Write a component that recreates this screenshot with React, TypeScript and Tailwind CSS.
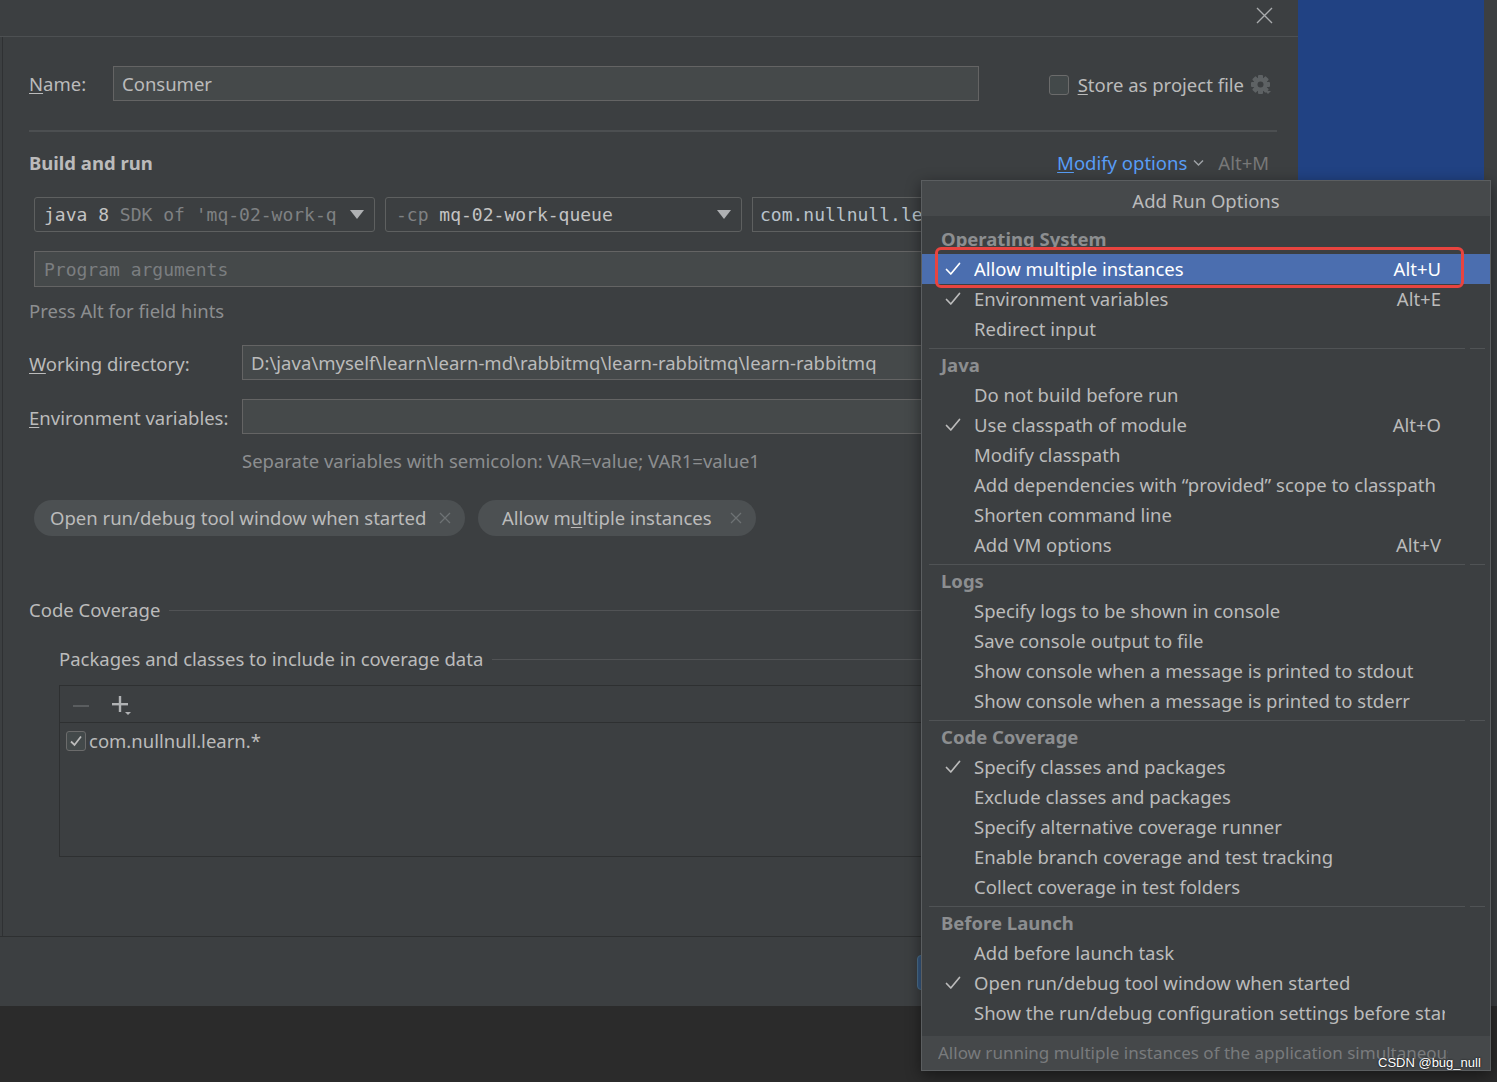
import React from "react";

const Check = ({ color = "#bbbbbb" }: { color?: string }) => (
  <svg width="16" height="16" viewBox="0 0 16 16" fill="none">
    <path d="M1.5 8.5 L5.8 13 L14.5 2.5" stroke={color} strokeWidth="1.7" strokeLinecap="round" strokeLinejoin="round" />
  </svg>
);

const SmallX = () => (
  <svg width="12" height="12" viewBox="0 0 12 12" fill="none">
    <path d="M1 1 L11 11 M11 1 L1 11" stroke="#6e7274" strokeWidth="1.3" />
  </svg>
);

const Triangle = () => (
  <svg width="14" height="9" viewBox="0 0 14 9">
    <polygon points="0,0 14,0 7,9" fill="#afb1b3" />
  </svg>
);

const Gear = () => (
  <svg width="22" height="22" viewBox="0 0 22 22">
    <g fill="#5e6264">
      {[0, 45, 90, 135].map((a) => (
        <rect key={a} x="8" y="1" width="5" height="19" rx="1" transform={`rotate(${a} 10.5 10.5)`} />
      ))}
      <circle cx="10.5" cy="10.5" r="7" />
    </g>
    <circle cx="10.5" cy="10.5" r="3" fill="#3c3f41" />
    <polygon points="15,17 21,17 18,20" fill="#5e6264" />
  </svg>
);

type Item = { label: string; checked?: boolean; shortcut?: string; selected?: boolean };

const sections: { title: string; items: Item[] }[] = [
  {
    title: "Operating System",
    items: [
      { label: "Allow multiple instances", checked: true, shortcut: "Alt+U", selected: true },
      { label: "Environment variables", checked: true, shortcut: "Alt+E" },
      { label: "Redirect input" },
    ],
  },
  {
    title: "Java",
    items: [
      { label: "Do not build before run" },
      { label: "Use classpath of module", checked: true, shortcut: "Alt+O" },
      { label: "Modify classpath" },
      { label: "Add dependencies with \u201cprovided\u201d scope to classpath" },
      { label: "Shorten command line" },
      { label: "Add VM options", shortcut: "Alt+V" },
    ],
  },
  {
    title: "Logs",
    items: [
      { label: "Specify logs to be shown in console" },
      { label: "Save console output to file" },
      { label: "Show console when a message is printed to stdout" },
      { label: "Show console when a message is printed to stderr" },
    ],
  },
  {
    title: "Code Coverage",
    items: [
      { label: "Specify classes and packages", checked: true },
      { label: "Exclude classes and packages" },
      { label: "Specify alternative coverage runner" },
      { label: "Enable branch coverage and test tracking" },
      { label: "Collect coverage in test folders" },
    ],
  },
  {
    title: "Before Launch",
    items: [
      { label: "Add before launch task" },
      { label: "Open run/debug tool window when started", checked: true },
      { label: "Show the run/debug configuration settings before start" },
    ],
  },
];

const MenuItem = ({ item }: { item: Item }) => (
  <div
    className={`flex h-[30px] items-center pl-[23px] pr-[45px] whitespace-nowrap ${
      item.selected ? "bg-[#4b6eaf] text-white" : "text-[#bbbbbb]"
    }`}
  >
    <div className="flex w-[16px] items-center">{item.checked ? <Check color={item.selected ? "#ffffff" : "#bbbbbb"} /> : null}</div>
    <span className="ml-[13px] flex-1 overflow-hidden">{item.label}</span>
    {item.shortcut ? <span className="ml-4 pr-[4px]">{item.shortcut}</span> : null}
  </div>
);

export default function App() {
  return (
    <div className="relative h-[1082px] w-[1497px] overflow-hidden bg-[#2b2b2b] font-['Noto_Sans',sans-serif] text-[18.5px] text-[#bbbbbb]">
      <div className="flex h-[1006px]">
        {/* Dialog */}
        <div className="flex w-[1298px] flex-col bg-[#3c3f41]">
          {/* title bar */}
          <div className="flex h-[37px] items-start justify-end border-b border-[#4d5052] pr-[25px] pt-[7px]">
            <svg width="17" height="17" viewBox="0 0 17 17" fill="none">
              <path d="M1 1 L16 16 M16 1 L1 16" stroke="#a9abad" strokeWidth="1.4" />
            </svg>
          </div>
          {/* content */}
          <div className="ml-[2px] flex h-[899px] flex-col border-l border-[#2f3133] pl-[26px] pr-[21px]">
            {/* Name row */}
            <div className="mt-[29px] flex h-[35px] items-center">
              <div className="w-[84px] leading-[26px]">
                <span className="underline underline-offset-2">N</span>ame:
              </div>
              <div className="flex h-[35px] w-[866px] items-center border border-[#646464] bg-[#45494a] pl-[8px]">Consumer</div>
              <div className="ml-auto mt-[3px] flex items-center pr-[5px]">
                <div className="h-[20px] w-[20px] rounded-[3px] border border-[#6b6b6b] bg-[#43494a]" />
                <span className="ml-[9px]">
                  <span className="underline underline-offset-2">S</span>tore as project file
                </span>
                <span className="ml-[6px]">
                  <Gear />
                </span>
              </div>
            </div>
            <div className="mt-[29px] h-[2px] bg-[#4c4f51]" />
            {/* Build and run */}
            <div className="mt-[16px] flex h-[30px] items-center justify-between pr-[8px]">
              <span className="font-bold text-[#bbbbbb]">Build and run</span>
              <div className="flex items-center">
                <span className="text-[#589df6]">
                  <span className="underline underline-offset-2">M</span>odify options
                </span>
                <svg className="ml-[6px]" width="11" height="8" viewBox="0 0 11 8" fill="none">
                  <path d="M1 1.5 L5.5 6 L10 1.5" stroke="#9ea2a6" strokeWidth="1.5" />
                </svg>
                <span className="ml-[14px] text-[#787878]">Alt+M</span>
              </div>
            </div>
            {/* combobox row */}
            <div className="mt-[19px] flex h-[35px] gap-[10px] pl-[5px] font-['DejaVu_Sans_Mono',monospace] text-[18px]">
              <div className="flex w-[341px] items-center rounded-[3px] border border-[#5e6060] pl-[9px] pr-[10px]">
                <span className="flex-1 overflow-hidden whitespace-nowrap">
                  <span className="text-[#c4c4c4]">java 8</span>
                  <span className="text-[#7f8183]"> SDK of 'mq-02-work-q</span>
                </span>
                <Triangle />
              </div>
              <div className="flex w-[357px] items-center rounded-[3px] border border-[#5e6060] pl-[10px] pr-[10px]">
                <span className="flex-1 overflow-hidden whitespace-nowrap">
                  <span className="text-[#7f8183]">-cp </span>
                  <span className="text-[#c4c4c4]">mq-02-work-queue</span>
                </span>
                <Triangle />
              </div>
              <div className="flex flex-1 items-center border border-[#5e6060] pl-[7px] text-[#b9c3cc]">com.nullnull.learn.Consumer</div>
            </div>
            {/* Program arguments */}
            <div className="ml-[5px] mt-[19px] flex h-[36px] items-center border border-[#646464] bg-[#45494a] pl-[9px] font-['DejaVu_Sans_Mono',monospace] text-[18px] text-[#7b7e80]">
              Program arguments
            </div>
            <div className="mt-[11px] h-[26px] leading-[26px] text-[#8c8e90]">Press Alt for field hints</div>
            {/* Working directory */}
            <div className="mt-[21px] flex h-[35px] items-center">
              <div className="w-[213px] pt-[3px]">
                <span className="underline underline-offset-2">W</span>orking directory:
              </div>
              <div className="flex h-[35px] flex-1 items-center border border-[#646464] bg-[#45494a] pl-[8px] whitespace-nowrap">
                D:\java\myself\learn\learn-md\rabbitmq\learn-rabbitmq\learn-rabbitmq
              </div>
            </div>
            <div className="mt-[19px] flex h-[35px] items-center">
              <div className="w-[213px] pt-[3px]">
                <span className="underline underline-offset-2">E</span>nvironment variables:
              </div>
              <div className="h-[35px] flex-1 border border-[#646464] bg-[#45494a]" />
            </div>
            <div className="mt-[14px] h-[26px] pl-[213px] leading-[26px] text-[#8c8e90]">Separate variables with semicolon: VAR=value; VAR1=value1</div>
            {/* chips */}
            <div className="mt-[26px] flex h-[36px] gap-[13px] pl-[5px]">
              <div className="flex w-[431px] items-center rounded-full bg-[#4c5052] pl-[16px] pr-[14px]">
                <span className="flex-1 whitespace-nowrap">Open run/debug tool window when started</span>
                <SmallX />
              </div>
              <div className="flex w-[278px] items-center rounded-full bg-[#4c5052] pl-[24px] pr-[14px]">
                <span className="flex-1 whitespace-nowrap">
                  Allow m<span className="underline underline-offset-2">u</span>ltiple instances
                </span>
                <SmallX />
              </div>
            </div>
            {/* Code coverage */}
            <div className="mt-[61px] flex h-[26px] items-center">
              <span className="whitespace-nowrap">Code Coverage</span>
              <div className="ml-[9px] h-px flex-1 bg-[#515355]" />
            </div>
            <div className="mt-[23px] flex h-[26px] items-center pl-[30px]">
              <span className="whitespace-nowrap">Packages and classes to include in coverage data</span>
              <div className="ml-[9px] h-px flex-1 bg-[#515355]" />
            </div>
            <div className="ml-[30px] mt-[13px] flex h-[172px] flex-col border border-[#2e3031]">
              <div className="flex h-[37px] items-center border-b border-[#2e3031] pl-[12px] pt-[4px]">
                <svg width="18" height="4" viewBox="0 0 18 4">
                  <rect x="1" y="1" width="16" height="2" fill="#5a5d5f" />
                </svg>
                <svg className="ml-[21px]" width="22" height="22" viewBox="0 0 22 22">
                  <rect x="1" y="8" width="16" height="2.4" fill="#b0b2b4" />
                  <rect x="7.8" y="1" width="2.4" height="16" fill="#b0b2b4" />
                  <polygon points="14,17 20,17 17,20" fill="#b0b2b4" />
                </svg>
              </div>
              <div className="flex h-[36px] items-center pl-[6px]">
                <div className="flex h-[20px] w-[20px] items-center justify-center rounded-[3px] border border-[#6b6b6b] bg-[#43494a]">
                  <svg width="14" height="14" viewBox="0 0 14 14" fill="none">
                    <path d="M2 7.5 L5.5 11 L12 2.5" stroke="#bbbbbb" strokeWidth="1.8" />
                  </svg>
                </div>
                <span className="ml-[3px]">com.nullnull.learn.*</span>
              </div>
            </div>
          </div>
          {/* footer */}
          <div className="flex h-[70px] justify-end gap-[10px] border-t border-[#2e3031] pr-[21px] pt-[18px]">
            <div className="h-[35px] w-[110px] rounded-[4px] border border-[#4c708c] bg-[#365880]" />
            <div className="h-[35px] w-[110px] rounded-[4px] border border-[#5e6060] bg-[#4c5052]" />
            <div className="h-[35px] w-[120px] rounded-[4px] border border-[#5e6060] bg-[#4c5052]" />
          </div>
        </div>
        <div className="w-[186px] bg-[#214283]" />
        <div className="flex-1 bg-[#3c3f41]" />
      </div>

      {/* Popup */}
      <div className="absolute left-[921px] top-[180px] flex h-[891px] w-[570px] flex-col border border-[#5b5e60] bg-[#3c3f41] shadow-[0_4px_14px_rgba(0,0,0,0.45)]">
        <div className="h-[35px] bg-[#46494b] pt-[2px] text-center leading-[35px] text-[#bbbbbb]">Add Run Options</div>
        {sections.map((s, i) => (
          <div key={s.title}>
            {i === 0 ? (
              <div className="h-[38px] pl-[19px] pt-[10px]">
                <div className="h-[26px] font-bold leading-[26px] text-[#8c8e90]">{s.title}</div>
              </div>
            ) : (
              <div className="flex h-[36px] flex-col pt-[4px]">
                <div className="flex h-px shrink-0">
                  <div className="ml-[7px] w-[536px] bg-[#505355]" />
                  <div className="ml-[5px] w-[15px] bg-[#505355]" />
                </div>
                <div className="mt-[3px] h-[26px] pl-[19px] font-bold leading-[26px] text-[#8c8e90]">{s.title}</div>
              </div>
            )}
            {s.items.map((it) => (
              <MenuItem key={it.label} item={it} />
            ))}
          </div>
        ))}
        <div className="mt-auto flex h-[34px] items-center overflow-hidden whitespace-nowrap bg-[#45484a] pl-[16px] pr-[42px] text-[17px] text-[#797b7d]">
          <span className="overflow-hidden">Allow running multiple instances of the application simultaneously</span>
        </div>
        <div className="absolute left-[13px] top-[66px] h-[41px] w-[529px] rounded-[6px] border-[3px] border-[#e8443f]" />
      </div>

      {/* watermark */}
      <div className="absolute left-[1378px] top-[1055px] font-['Liberation_Sans',sans-serif] text-[13px] leading-[16px] text-white [text-shadow:0_0_2px_#000]">
        CSDN @bug_null
      </div>
    </div>
  );
}
